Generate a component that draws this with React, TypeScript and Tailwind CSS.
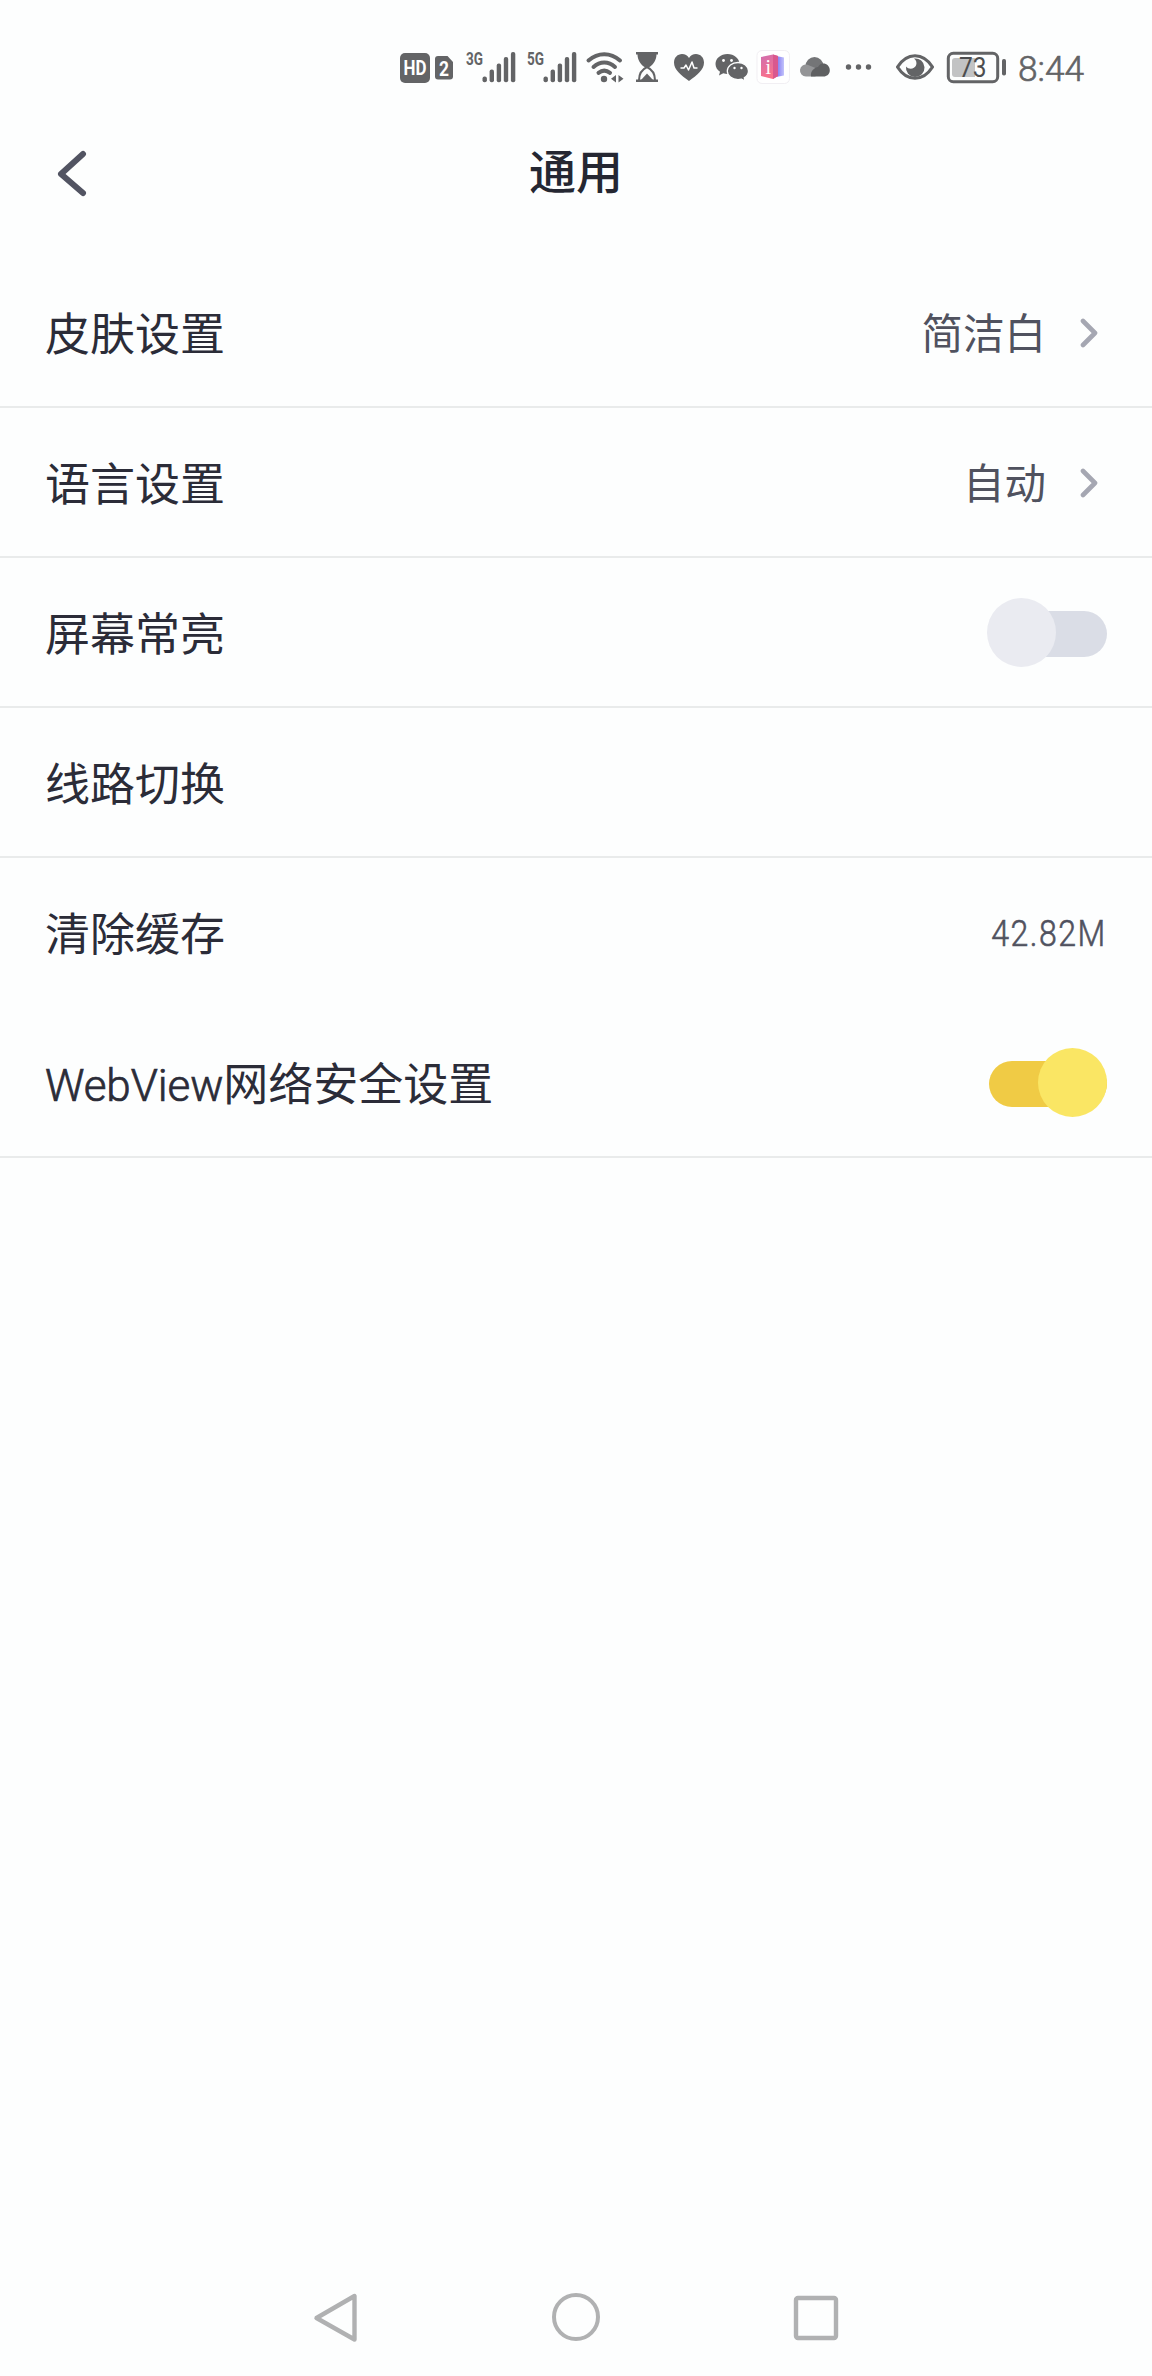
import { useState } from "react";
import type { ReactNode } from "react";
import { clsx } from "clsx";

// Status glyphs share one baseline strip (y 48..88), so each svg only shifts its x origin.
function Glyph({ x, w, className, children }: { x: number; w: number; className?: string; children: ReactNode }) {
    return (
        <svg width={w} height={40} viewBox={`${x} 48 ${w} 40`} className={clsx("shrink-0", className)} fill="currentColor">
            {children}
        </svg>
    );
}

function Signal({ label, className }: { label: string; className?: string }) {
    const tops = [76.5, 69.5, 63.5, 57, 52];
    return (
        <Glyph x={0} w={50} className={className}>
            <text x={0} y={65.2} fontSize={18.5} fontWeight={700} textLength={17} lengthAdjust="spacingAndGlyphs">
                {label}
            </text>
            {tops.map((top, i) => (
                <rect key={top} x={16.5 + i * 7.1} y={top} width={4.4} height={82.2 - top} rx={2} />
            ))}
        </Glyph>
    );
}

function StatusBar() {
    return (
        <div className="flex h-[88px] items-end pl-[400px] font-['Roboto','Noto_Sans_CJK_SC',sans-serif] text-[#636466]">
            <Glyph x={400} w={66}>
                <rect x={400} y={53} width={30} height={30} rx={5} />
                <text x={403.5} y={75.2} fontSize={19.5} fontWeight={700} fill="#fff" textLength={23} lengthAdjust="spacingAndGlyphs">
                    HD
                </text>
                <path d="M438 56h9.500l5.500 6v14.500a3 3 0 0 1-3 3h-12a3 3 0 0 1-3-3v-17.500a3 3 0 0 1 3-3z" />
                <text x={439} y={75.500} fontSize={21} fontWeight={700} fill="#fff" textLength={10} lengthAdjust="spacingAndGlyphs">
                    2
                </text>
            </Glyph>
            <Signal label="3G" className="mr-[11px]" />
            <Signal label="5G" />

            {/* wifi */}
            <Glyph x={577} w={55}>
                <g fill="none" stroke="currentColor" strokeWidth={4} strokeLinecap="round">
                    <path d="M588.500 60.500c9.500-8.500 22-8.500 31.500 0" />
                    <path d="M593.500 67c6.500-6 15-6 21.500 0" />
                    <path d="M598.500 72.800c4-3 7.500-3 11.500 0" />
                </g>
                <circle cx={604} cy={79} r={3.2} />
                <path d="M616 75v7.500l-5-3.700zM618.500 75v7.500l5-3.700z" />
            </Glyph>
            {/* hourglass */}
            <Glyph x={632} w={38}>
                <path d="M636 52h22v2.500h-22zM636 79.500h22v2.500h-22zM637.500 54h19c0 6-3 10.500-7 13h-5c-4-2.500-7-7-7-13z" />
                <path d="M639 80c0-7 3-10.500 8-13 5 2.500 8 6 8 13" fill="none" stroke="currentColor" strokeWidth={2} />
                <path d="M641 80l6-6.500 6 6.500z" />
            </Glyph>
            {/* health */}
            <Glyph x={670} w={42}>
                <path d="M689 81c-8-6-15-11-15-18.500 0-5 3.600-8.500 8-8.500 3 0 5.500 1.400 7 4 1.500-2.600 4-4 7-4 4.400 0 8 3.500 8 8.500 0 7.500-7 12.500-15 18.500z" />
                <path d="M680.500 68h3.500l2-3 2.500 5 3.500-8 2 6h3.500" fill="none" stroke="#fff" strokeWidth={1.5} strokeLinejoin="round" />
            </Glyph>
            {/* chat */}
            <Glyph x={712} w={43}>
                <path d="M727.500 54c-6.800 0-12 4.400-12 10 0 3.300 1.800 6 4.500 7.800l-1 3.700 4.300-2.200c1.400.4 2.800.6 4.200.6 6.600 0 12-4.400 12-9.900s-5.400-10-12-10z" />
                <path d="M738 62.500c-6 0-10.700 3.800-10.700 8.500s4.700 8.600 10.700 8.600c1.300 0 2.500-.2 3.600-.5l3.500 1.900-.8-3.100c2.500-1.600 4.200-4 4.200-6.900 0-4.700-4.700-8.500-10.500-8.500z" stroke="#fdfefe" strokeWidth={1.3} />
                <g fill="#fff">
                    <circle cx={723.5} cy={60.5} r={1.4} />
                    <circle cx={731.5} cy={60.5} r={1.4} />
                    <circle cx={734.5} cy={68} r={1.2} />
                    <circle cx={741.5} cy={68} r={1.2} />
                </g>
            </Glyph>
            {/* reader app */}
            <Glyph x={755} w={40}>
                <defs>
                    <linearGradient id="cover" x1="0" y1="0" x2="0.4" y2="1">
                        <stop offset="0" stopColor="#cf6db0" />
                        <stop offset="1" stopColor="#fb7289" />
                    </linearGradient>
                    <linearGradient id="spine" x1="0" y1="0" x2="1" y2="0">
                        <stop offset="0" stopColor="#7a6df0" />
                        <stop offset="1" stopColor="#c3c4fb" />
                    </linearGradient>
                </defs>
                <rect x={757} y={50.5} width={32.5} height={33} rx={5} fill="#fff" stroke="#f1eff3" strokeWidth={1} />
                <path d="M776 56l8 1.500v18l-8 1.500z" fill="url(#spine)" />
                <path d="M761 57l12-2.500 5 1.500v20l-5 3-12-3z" fill="url(#cover)" />
                <path d="M773 54.500l5 1.500v20l-5 3z" fill="#d9588e" />
                <text x={765.5} y={73.500} fontSize={20} fill="#fff" fontFamily="Liberation Serif, serif">
                    i
                </text>
            </Glyph>
            {/* cloud */}
            <Glyph x={795} w={45}>
                <circle cx={814.5} cy={66} r={9} fill="#747577" />
                <path d="M806 76.500a6 6 0 1 1 1.500-11.800l8 3.300v8.500z" fill="#949597" />
                <path d="M811 76.500c-1-6 4-9 7-9.500 1.500-3 4-4 6.500-3.500 3.500.7 5.500 4 5.300 7.200-.2 3.300-2.800 5.800-6.300 5.800z" fill="#5f6062" />
            </Glyph>
            <Glyph x={840} w={50}>
                <circle cx={848.5} cy={67} r={2.7} />
                <circle cx={858.5} cy={67} r={2.7} />
                <circle cx={868.5} cy={67} r={2.7} />
            </Glyph>
            {/* eye comfort */}
            <Glyph x={890} w={50}>
                <path d="M897.500 67c9.500-15 25.500-15 35 0-9.500 15-25.500 15-35 0z" fill="none" stroke="currentColor" strokeWidth={3.2} strokeLinejoin="round" />
                <path d="M914 58.500a9.300 9.300 0 1 1-8 8c3 3.500 8.500 2.500 10-1 1-2.500.5-5-2-7z" />
            </Glyph>
            {/* battery */}
            <Glyph x={940} w={78}>
                <rect x={948.3} y={53.3} width={49.4} height={28.4} rx={5} fill="none" stroke="currentColor" strokeWidth={3} />
                <path d="M955 58h20v19h-20a3 3 0 0 1-3-3v-13a3 3 0 0 1 3-3z" fill="#c2c3c4" />
                <rect x={1002} y={59} width={4} height={16.500} rx={1.8} />
                <text x={959} y={76.800} fontSize={27} fill="#4c4d4f" textLength={27.500} lengthAdjust="spacingAndGlyphs">
                    73
                </text>
            </Glyph>
            <Glyph x={1018} w={70}>
                <text x={1018} y={80.500} fontSize={34.500} fontWeight={300} stroke="currentColor" strokeWidth={0.6} textLength={66} lengthAdjust="spacingAndGlyphs">
                    8:44
                </text>
            </Glyph>
        </div>
    );
}

function Row({ label, latin, divider = true, children }: { label: string; latin?: string; divider?: boolean; children?: ReactNode }) {
    return (
        <div className={clsx("flex h-[150px] items-center justify-between border-b-2 pt-[3px] pr-[45px] pl-[45px]", divider ? "border-[#e9ebeb]" : "border-transparent")}>
            <span className="pt-[3px] text-[45px] leading-none text-[#2b2c38]">
                {latin && <span className="text-[44px] font-light tracking-[-0.1px] [-webkit-text-stroke:0.7px]">{latin}</span>}
                {label}
            </span>
            {children}
        </div>
    );
}

function Value({ text }: { text: string }) {
    return (
        <div className="flex items-center pr-2">
            <span className="pt-0.5 text-[41.5px] leading-none text-[#50525f]">{text}</span>
            <svg width={20} height={32} viewBox="0 0 20 32" className="ml-[33px]" fill="none" stroke="#a5a7b2" strokeWidth={4.6} strokeLinecap="round" strokeLinejoin="round">
                <path d="M4 3l12 12-12 12" />
            </svg>
        </div>
    );
}

function Toggle({ on, onChange }: { on: boolean; onChange: () => void }) {
    return (
        <button
            role="switch"
            aria-checked={on}
            onClick={onChange}
            className={clsx("flex h-[46px] w-[118px] items-center rounded-full pb-[2px]", on ? "justify-end bg-[#f0cb45]" : "justify-start bg-[#dadde6]")}
        >
            <span className={clsx("size-[69px] shrink-0 rounded-full", on ? "bg-[#fae664]" : "-ml-0.5 bg-[#eaebf1]")} />
        </button>
    );
}

function NavBar() {
    return (
        <div className="flex h-[120px] items-center justify-center gap-[180px] pt-[4px] text-[#b0b1b2]">
            <svg width={60} height={60} viewBox="0 0 60 60" fill="none" stroke="currentColor" strokeWidth={4.4} strokeLinejoin="round">
                <path d="M10.500 30L48.500 8v43.500z" />
            </svg>
            <svg width={60} height={60} viewBox="0 0 60 60" fill="none" stroke="currentColor" strokeWidth={4}>
                <circle cx={30} cy={29} r={22} />
            </svg>
            <svg width={60} height={60} viewBox="0 0 60 60" fill="none" stroke="currentColor" strokeWidth={4.4}>
                <rect x={10} y={10} width={40} height={40} rx={2} />
            </svg>
        </div>
    );
}

export default function App() {
    const [keepAwake, setKeepAwake] = useState(false);
    const [safeWebView, setSafeWebView] = useState(true);

    return (
        <div className="flex h-[2376px] w-[1152px] flex-col bg-[#fdfefe] font-['Roboto','Noto_Sans_CJK_SC',sans-serif]">
            <StatusBar />

            <header className="grid h-[170px] grid-cols-3 items-start px-[54px] pt-[61px]">
                <button aria-label="返回" className="w-9">
                    <svg width={36} height={48} viewBox="0 0 36 48" fill="none" stroke="#525462" strokeWidth={6} strokeLinecap="round" strokeLinejoin="round">
                        <path d="M29 5L7 25l22 19" />
                    </svg>
                </button>
                <h1 className="text-center text-[47px] leading-[48px] font-medium text-[#252732]">通用</h1>
            </header>

            <main className="flex-1">
                <Row label="皮肤设置">
                    <Value text="简洁白" />
                </Row>
                <Row label="语言设置">
                    <Value text="自动" />
                </Row>
                <Row label="屏幕常亮">
                    <Toggle on={keepAwake} onChange={() => setKeepAwake(!keepAwake)} />
                </Row>
                <Row label="线路切换" />
                <Row label="清除缓存" divider={false}>
                    <span className="origin-right scale-x-[0.89] text-[36px] leading-none font-light tracking-[1.7px] text-[#50525f] [-webkit-text-stroke:0.6px]">42.82M</span>
                </Row>
                <Row latin="WebView" label="网络安全设置">
                    <Toggle on={safeWebView} onChange={() => setSafeWebView(!safeWebView)} />
                </Row>
            </main>

            <NavBar />
        </div>
    );
}
